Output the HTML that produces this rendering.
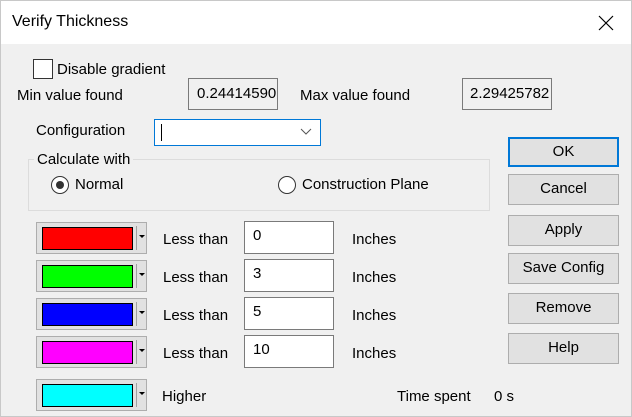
<!DOCTYPE html>
<html><head><style>
*{box-sizing:border-box;margin:0;padding:0}
body{width:632px;height:417px;background:#f0f0f0;font-family:"Liberation Sans",sans-serif;font-size:15px;color:#000;position:relative;overflow:hidden}
.a{position:absolute;white-space:nowrap}
.title{left:0;top:0;width:632px;height:44px;background:#fff}
.tb{background:#f0f0f0;border:1px solid #7a7a7a;padding:3px 0 0 8px;overflow:hidden}
.in{background:#fff;border:1px solid #7a7a7a;padding:5px 0 0 8px}
.btn{left:508px;width:111px;background:#e1e1e1;border:1px solid #adadad;text-align:center;line-height:28px}
.cb{left:36px;width:111px;height:32px;background:#e1e1e1;border:1px solid #adadad}
.cb .sw{position:absolute;left:5px;top:4px;width:91px;height:23px;border:1px solid #000}
.cb .sep{position:absolute;left:99px;top:3px;width:1px;height:24px;background:#a0a0a0}
.cb .ar{position:absolute;left:102px;top:12px;width:0;height:0;border-left:3px solid transparent;border-right:3px solid transparent;border-top:3px solid #000}
.rad{width:18px;height:18px;border:1px solid #333;border-radius:50%;background:#fff}
</style></head><body>
<div class="a title"></div>
<div class="a" style="left:0;top:0;width:632px;height:417px;border:1px solid #c8c8c8"></div>
<div class="a" style="left:12px;top:13px;font-size:16px">Verify Thickness</div>
<svg class="a" style="left:598px;top:15px" width="16" height="16"><path d="M1 1L15 15M15 1L1 15" stroke="#000" stroke-width="1.2"/></svg>

<div class="a" style="left:33px;top:59px;width:20px;height:20px;border:1px solid #333;background:#fff"></div>
<div class="a" style="left:57px;top:61px">Disable gradient</div>
<div class="a" style="left:17px;top:87px">Min value found</div>
<div class="a tb" style="left:188px;top:78px;width:90px;height:32px;padding-top:6px">0.24414590</div>
<div class="a" style="left:300px;top:87px">Max value found</div>
<div class="a tb" style="left:462px;top:78px;width:90px;height:32px;padding-top:6px;padding-left:7px">2.29425782</div>

<div class="a" style="left:36px;top:122px">Configuration</div>
<div class="a" style="left:154px;top:119px;width:167px;height:27px;background:#fff;border:1px solid #0078d7"></div>
<div class="a" style="left:161px;top:124px;width:1px;height:17px;background:#000"></div>
<svg class="a" style="left:300px;top:128px" width="12" height="8"><path d="M1 1L6 6L11 1" stroke="#555" fill="none"/></svg>

<div class="a" style="left:28px;top:159px;width:462px;height:52px;border:1px solid #dcdcdc"></div>
<div class="a" style="left:34px;top:151px;background:#f0f0f0;padding:0 3px">Calculate with</div>
<div class="a rad" style="left:51px;top:176px"></div>
<div class="a" style="left:56px;top:181px;width:8px;height:8px;border-radius:50%;background:#333"></div>
<div class="a" style="left:75px;top:176px">Normal</div>
<div class="a rad" style="left:278px;top:176px"></div>
<div class="a" style="left:302px;top:176px">Construction Plane</div>

<div class="a cb" style="top:222px"><div class="sw" style="background:#f00"></div><div class="sep"></div><div class="ar"></div></div>
<div class="a cb" style="top:260px"><div class="sw" style="background:#0f0"></div><div class="sep"></div><div class="ar"></div></div>
<div class="a cb" style="top:298px"><div class="sw" style="background:#00f"></div><div class="sep"></div><div class="ar"></div></div>
<div class="a cb" style="top:336px"><div class="sw" style="background:#f0f"></div><div class="sep"></div><div class="ar"></div></div>
<div class="a cb" style="top:379px"><div class="sw" style="background:#0ff"></div><div class="sep"></div><div class="ar"></div></div>

<div class="a" style="left:163px;top:231px">Less than</div>
<div class="a" style="left:163px;top:269px">Less than</div>
<div class="a" style="left:163px;top:307px">Less than</div>
<div class="a" style="left:163px;top:345px">Less than</div>
<div class="a" style="left:162px;top:388px">Higher</div>

<div class="a in" style="left:244px;top:221px;width:90px;height:33px">0</div>
<div class="a in" style="left:244px;top:259px;width:90px;height:33px">3</div>
<div class="a in" style="left:244px;top:297px;width:90px;height:33px">5</div>
<div class="a in" style="left:244px;top:335px;width:90px;height:33px">10</div>

<div class="a" style="left:352px;top:231px">Inches</div>
<div class="a" style="left:352px;top:269px">Inches</div>
<div class="a" style="left:352px;top:307px">Inches</div>
<div class="a" style="left:352px;top:345px">Inches</div>

<div class="a" style="left:397px;top:388px">Time spent</div>
<div class="a" style="left:494px;top:388px">0 s</div>

<div class="a btn" style="top:137px;height:30px;border:2px solid #0078d7;line-height:26px">OK</div>
<div class="a btn" style="top:174px;height:31px">Cancel</div>
<div class="a btn" style="top:215px;height:31px">Apply</div>
<div class="a btn" style="top:253px;height:31px">Save Config</div>
<div class="a btn" style="top:293px;height:31px">Remove</div>
<div class="a btn" style="top:333px;height:31px">Help</div>
</body></html>
